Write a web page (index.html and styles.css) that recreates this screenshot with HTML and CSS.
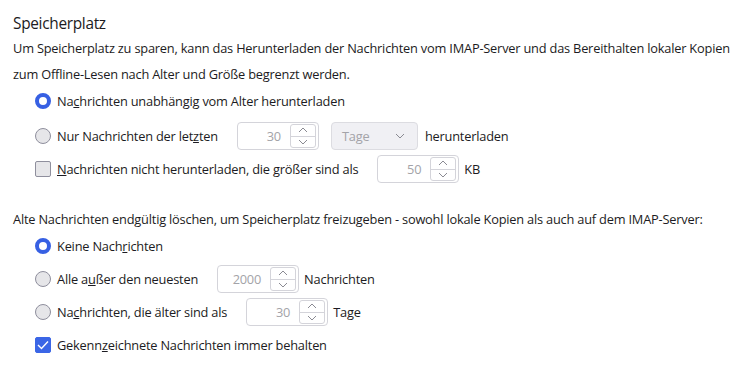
FILE: index.html
```html
<!DOCTYPE html>
<html lang="de">
<head>
  <meta charset="UTF-8" />
  <title>Speicherplatz</title>
  <link rel="stylesheet" href="styles.css">
</head>
<body>
  <div class="pane">
    <h2 class="title">Speicherplatz</h2>
    <p class="desc">Um Speicherplatz zu sparen, kann das Herunterladen der Nachrichten vom IMAP-Server und das Bereithalten lokaler Kopien zum Offline-Lesen nach Alter und Größe begrenzt werden.</p>

    <div class="group first">
      <div class="row">
        <span class="radio on"></span>
        <span>Na<u>c</u>hrichten unabhängig vom Alter herunterladen</span>
      </div>
      <div class="row">
        <span class="radio"></span>
        <span class="lbl">Nur Nachrichten der let<u>z</u>ten</span>
        <span class="num">
          <span class="val">30</span>
          <span class="spin">
            <span class="arrow"><svg width="10" height="6" viewBox="0 0 10 6"><polyline points="1,5 5,1 9,5" /></svg></span>
            <span class="arrow"><svg width="10" height="6" viewBox="0 0 10 6"><polyline points="1,1 5,5 9,1" /></svg></span>
          </span>
        </span>
        <span class="select">Tage<svg width="10" height="6" viewBox="0 0 10 6"><polyline points="1,1 5,5 9,1" /></svg></span>
        <span>herunterladen</span>
      </div>
    </div>
    <div class="group">
      <div class="row">
        <span class="check"></span>
        <span class="lbl"><u>N</u>achrichten nicht herunterladen, die größer sind als</span>
        <span class="num">
          <span class="val">50</span>
          <span class="spin">
            <span class="arrow"><svg width="10" height="6" viewBox="0 0 10 6"><polyline points="1,5 5,1 9,5" /></svg></span>
            <span class="arrow"><svg width="10" height="6" viewBox="0 0 10 6"><polyline points="1,1 5,5 9,1" /></svg></span>
          </span>
        </span>
        <span>KB</span>
      </div>
    </div>

    <p class="desc spaced">Alte Nachrichten endgültig löschen, um Speicherplatz freizugeben - sowohl lokale Kopien als auch auf dem IMAP-Server:</p>

    <div class="group">
      <div class="row">
        <span class="radio on"></span>
        <span>Keine Nach<u>r</u>ichten</span>
      </div>
      <div class="row">
        <span class="radio"></span>
        <span class="lbl">Alle a<u>u</u>ßer den neuesten</span>
        <span class="num">
          <span class="val">2000</span>
          <span class="spin">
            <span class="arrow"><svg width="10" height="6" viewBox="0 0 10 6"><polyline points="1,5 5,1 9,5" /></svg></span>
            <span class="arrow"><svg width="10" height="6" viewBox="0 0 10 6"><polyline points="1,1 5,5 9,1" /></svg></span>
          </span>
        </span>
        <span>Nachrichten</span>
      </div>
      <div class="row">
        <span class="radio"></span>
        <span class="lbl">Na<u>c</u>hrichten, die älter sind als</span>
        <span class="num">
          <span class="val">30</span>
          <span class="spin">
            <span class="arrow"><svg width="10" height="6" viewBox="0 0 10 6"><polyline points="1,5 5,1 9,5" /></svg></span>
            <span class="arrow"><svg width="10" height="6" viewBox="0 0 10 6"><polyline points="1,1 5,5 9,1" /></svg></span>
          </span>
        </span>
        <span>Tage</span>
      </div>
      <div class="row">
        <span class="check on"><svg width="12" height="10" viewBox="0 0 12 10"><polyline points="1,5 4.5,8.5 11,1.5" /></svg></span>
        <span>Gekenn<u>z</u>eichnete Nachrichten immer behalten</span>
      </div>
    </div>
  </div>
</body>
</html>
```

FILE: styles.css
```css
body {
  margin: 0;
  font-family: 'Open Sans', sans-serif;
  font-size: 12.8px;
  letter-spacing: -0.2px;
  color: #1c1b22;
  background: #fff;
}
.pane {
  padding: 12px 6px 11px 13px;
}
.title {
  margin: 0 0 -1px;
  font-size: 15.4px;
  font-weight: 400;
  letter-spacing: -0.3px;
  line-height: 24px;
}
.desc {
  margin: 0;
  line-height: 26px;
}
.desc.spaced {
  margin-top: 23px;
}
.group {
  display: flex;
  flex-direction: column;
  gap: 5px;
  padding-left: 22px;
}
.group.first {
  gap: 7px;
  margin-bottom: 5px;
}
.row {
  display: flex;
  align-items: center;
  height: 28px;
  white-space: nowrap;
}
.radio {
  flex: none;
  box-sizing: border-box;
  width: 16px;
  height: 16px;
  margin-right: 6px;
  border: 1px solid #8f8f9d;
  border-radius: 50%;
  background: #e6e6e9;
}
.radio.on {
  border: 4.5px solid #3760e3;
  background: #fff;
}
.check {
  flex: none;
  box-sizing: border-box;
  width: 16px;
  height: 16px;
  margin-right: 6px;
  border: 1px solid #8f8f9d;
  border-radius: 2px;
  background: #e6e6e9;
  display: flex;
  align-items: center;
  justify-content: center;
}
.check.on {
  border-color: #3b66e6;
  background: #3b66e6;
}
.check svg polyline {
  fill: none;
  stroke: #fff;
  stroke-width: 1.4;
}
.lbl {
  margin-right: 19px;
}
.num {
  flex: none;
  box-sizing: border-box;
  width: 82px;
  height: 28px;
  margin-right: 5px;
  padding: 1px 2px 1px 0;
  border: 1px solid #d4d4da;
  border-radius: 4px;
  background: #fff;
  display: flex;
  align-items: center;
  justify-content: flex-end;
}
.val {
  color: #a3a3a8;
  margin-right: 9px;
}
.spin {
  box-sizing: border-box;
  width: 26px;
  height: 100%;
  border: 1px solid #d4d4da;
  border-radius: 3px;
  display: flex;
  flex-direction: column;
}
.arrow {
  flex: 1;
  display: flex;
  align-items: center;
  justify-content: center;
}
.arrow + .arrow {
  border-top: 1px solid #d4d4da;
}
.num svg polyline,
.select svg polyline {
  fill: none;
  stroke: #8a8a92;
  stroke-width: 1;
}
.select {
  flex: none;
  box-sizing: border-box;
  width: 87px;
  height: 28px;
  margin: 0 7px;
  padding: 0 12px 0 10px;
  border: 1px solid #dcdce1;
  border-radius: 4px;
  background: #f0f0f4;
  color: #a3a3a8;
  display: flex;
  align-items: center;
  justify-content: space-between;
}
```
